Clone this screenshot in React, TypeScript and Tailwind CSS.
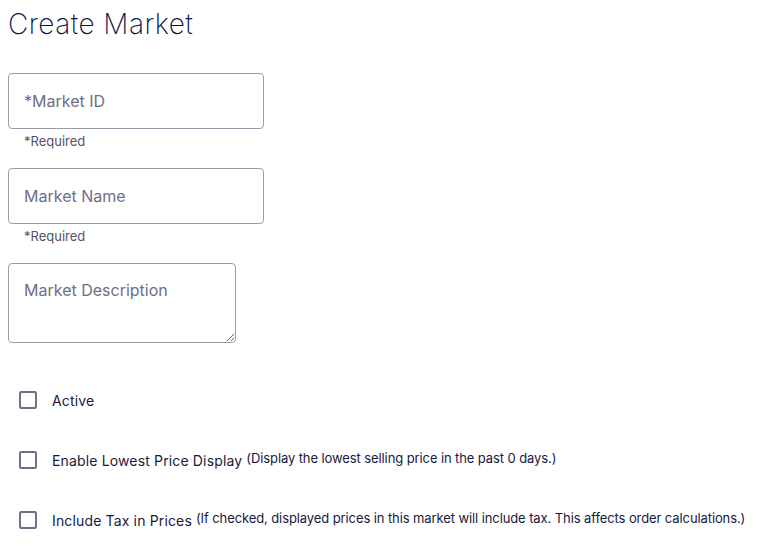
import React from "react"

const font = { fontFamily: "Inter, 'Noto Sans', sans-serif" }

function Field({ placeholder }: { placeholder: string }) {
  return (
    <div>
      <input
        type="text"
        placeholder={placeholder}
        className="block w-[256px] h-[56px] rounded-[4px] border border-[#9b9bab] px-[15px] text-[16px] text-[#1b1d3c] placeholder-[#6e6e85] outline-none"
      />
      <p className="pl-[16px] pt-[4px] text-[13px] leading-[16px] text-[#52526b]">*Required</p>
    </div>
  )
}

function Check({ label, hint }: { label: string; hint?: string }) {
  return (
    <label className="flex items-center h-[20px]">
      <span className="ml-[11px] w-[18px] h-[18px] rounded-[2px] border-2 border-[#6f6f88]" />
      <span className="ml-[15px] text-[14px] text-[#171a3d] tracking-[0.15px]">{label}</span>
      {hint && <span className="ml-[4px] -mt-[3px] text-[13px] tracking-[-0.1px] text-[#171a3d]">{hint}</span>}
    </label>
  )
}

export default function App() {
  return (
    <div className="min-h-screen bg-white px-[8px] pt-[4px]" style={font}>
      <h1 className="text-[28px] font-extralight leading-[40px] tracking-[0.45px] text-[#0b1445]">Create Market</h1>
      <div className="mt-[29px] flex flex-col gap-[19px]">
        <Field placeholder="*Market ID" />
        <Field placeholder="Market Name" />
        <textarea
          placeholder="Market Description"
          className="block w-[228px] h-[80px] rounded-[4px] border border-[#9b9bab] px-[15px] py-[16px] text-[16px] leading-[20px] text-[#1b1d3c] placeholder-[#6e6e85] outline-none"
        />
      </div>
      <div className="mt-[47px] flex flex-col gap-[40px]">
        <Check label="Active" />
        <Check label="Enable Lowest Price Display" hint="(Display the lowest selling price in the past 0 days.)" />
        <Check
          label="Include Tax in Prices"
          hint="(If checked, displayed prices in this market will include tax. This affects order calculations.)"
        />
      </div>
    </div>
  )
}
